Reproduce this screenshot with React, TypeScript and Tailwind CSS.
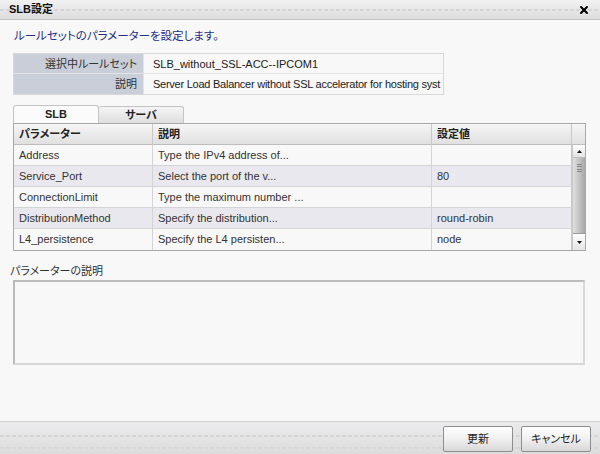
import { X } from 'lucide-react';

const rows = [
  { name: 'Address', desc: 'Type the IPv4 address of...', value: '' },
  { name: 'Service_Port', desc: 'Select the port of the v...', value: '80' },
  { name: 'ConnectionLimit', desc: 'Type the maximum number ...', value: '' },
  { name: 'DistributionMethod', desc: 'Specify the distribution...', value: 'round-robin' },
  { name: 'L4_persistence', desc: 'Specify the L4 persisten...', value: 'node' },
];

const dashed =
  'bg-[repeating-linear-gradient(90deg,#d6d6d8_0px,#d6d6d8_4px,transparent_4px,transparent_6px)]';

export default function App() {
  return (
    <div
      className="w-[600px] h-[454px] flex flex-col bg-[#f8f8f8] text-[11px] text-[#222] overflow-hidden [font-feature-settings:'palt']"
      style={{ fontFamily: '"Liberation Sans", "Noto Sans CJK JP", sans-serif' }}
    >
      {/* title bar */}
      <div className="relative h-[20px] shrink-0 bg-gradient-to-b from-[#f2f2f2] to-[#dcdcdc] border-b border-[#c4c4c4] flex items-center justify-between px-[9px]">
        <div className={`absolute left-0 right-0 top-[9px] h-[2px] ${dashed}`} />
        <span className="relative font-bold text-[11px] text-[#111]">SLB設定</span>
        <X className="relative w-[12px] h-[12px] text-black mr-[1px]" strokeWidth={4} />
      </div>

      <div className="flex-1 flex flex-col px-[13px]">
        <div className="mt-[9px] h-[14px] leading-[14px] text-[#1f2d86] pl-[1px] text-[11.5px]">
          ルールセットのパラメーターを設定します。
        </div>

        {/* info table */}
        <div className="mt-[10px] w-[431px] grid grid-cols-[130px_1fr] border border-[#d8d8d8]">
          <div className="h-[20px] bg-[#c9ced8] text-right pr-[6px] leading-[20px] text-[#333] border-b border-r border-[#e4e4e4]">
            選択中ルールセット
          </div>
          <div className="h-[20px] pl-[9px] leading-[20px] text-[#222] border-b border-[#e4e4e4] whitespace-nowrap overflow-hidden">
            SLB_without_SSL-ACC--IPCOM1
          </div>
          <div className="h-[20px] bg-[#c9ced8] text-right pr-[6px] leading-[20px] text-[#333] border-r border-[#e4e4e4]">
            説明
          </div>
          <div className="h-[20px] pl-[9px] leading-[20px] text-[#222] whitespace-nowrap overflow-hidden tracking-[-0.25px]">
            Server Load Balancer without SSL accelerator for hosting syst
          </div>
        </div>

        {/* tabs */}
        <div className="mt-[10px] flex h-[18px]">
          <div className="w-[86px] h-[18px] border border-b-0 border-[#c4c4c4] rounded-t-[3px] bg-[#fbfbfb] text-center font-bold leading-[17px] text-[#222]">
            SLB
          </div>
          <div className="w-[85px] h-[17px] mt-[1px] border border-b-0 border-l-0 border-[#c4c4c4] rounded-t-[3px] bg-gradient-to-b from-[#f6f6f6] to-[#dedede] text-center font-bold leading-[16px] text-[#222]">
            サーバ
          </div>
        </div>

        {/* grid */}
        <div className="w-[573px] border border-[#a8a8a8] bg-[#f8f8f8]">
          <div className="grid grid-cols-[139px_279px_140px_13px] h-[21px] bg-gradient-to-b from-[#f6f6f6] to-[#e0e0e0] border-b border-[#bdbdbd] font-bold text-[#222]">
            <div className="pl-[5px] leading-[21px] border-r border-[#c8c8c8]">パラメーター</div>
            <div className="pl-[5px] leading-[21px] border-r border-[#c8c8c8]">説明</div>
            <div className="pl-[5px] leading-[21px] border-r border-[#c8c8c8]">設定値</div>
            <div />
          </div>
          <div className="flex">
            <div className="w-[558px]">
              {rows.map((r, i) => (
                <div
                  key={r.name}
                  className={`grid grid-cols-[139px_279px_140px] h-[21px] ${i < rows.length - 1 ? 'border-b border-[#d4d4d8]' : ''} ${i % 2 === 1 ? 'bg-[#e8e8ee]' : 'bg-[#f8f8f8]'} text-[#333]`}
                >
                  <div className="pl-[5px] leading-[21px] border-r border-[#d4d4d8] whitespace-nowrap overflow-hidden">{r.name}</div>
                  <div className="pl-[5px] leading-[21px] border-r border-[#d4d4d8] whitespace-nowrap overflow-hidden">{r.desc}</div>
                  <div className="pl-[5px] leading-[21px] border-r border-[#c8c8c8] whitespace-nowrap overflow-hidden">{r.value}</div>
                </div>
              ))}
            </div>
            {/* scrollbar */}
            <div className="w-[13px] h-[105px] flex flex-col bg-[#ececec] border-l border-[#c8c8c8]">
              <div className="h-[13px] flex items-center justify-center bg-gradient-to-b from-[#ffffff] to-[#e4e4e4] border-b border-[#bdbdbd]">
                <svg width="5" height="3" viewBox="0 0 5 3"><path d="M2.5 0L5 3H0z" fill="#111" /></svg>
              </div>
              <div className="h-[76px] bg-gradient-to-r from-[#e0e0e0] via-[#c4c4c4] to-[#a8a8a8] border-b border-[#9a9a9a] flex justify-center pt-[6px]">
                <div className="w-[5px] h-[8px] flex flex-col justify-between">
                  <div className="h-px bg-[#888]" />
                  <div className="h-px bg-[#888]" />
                  <div className="h-px bg-[#888]" />
                  <div className="h-px bg-[#888]" />
                </div>
              </div>
              <div className="flex-1 flex items-center justify-center bg-gradient-to-b from-[#ffffff] to-[#e4e4e4]">
                <svg width="5" height="3" viewBox="0 0 5 3"><path d="M0 0H5L2.5 3z" fill="#111" /></svg>
              </div>
            </div>
          </div>
        </div>

        <div className="mt-[13px] -ml-[3px] h-[14px] leading-[14px] text-[#333]">パラメーターの説明</div>
        <div className="mt-[2px] w-[572px] h-[85px] border-2 border-[#bcbcbc] border-r-[#d8d8d8] border-b-[#d8d8d8] bg-[#f8f8f8]" />
      </div>

      {/* footer */}
      <div className="relative h-[33px] shrink-0 border-t border-[#d0d0d0] bg-gradient-to-b from-[#ebebed] to-[#dcdcdc] flex items-start justify-end gap-[8px] pr-[9px] pt-[4px]">
        <div className={`absolute left-0 right-0 top-[13px] h-[2px] ${dashed}`} />
        <div className={`absolute left-0 right-0 top-[25px] h-[2px] ${dashed}`} />
        <button className="relative w-[70px] h-[26px] rounded-[2px] border border-[#8e8e8e] bg-gradient-to-b from-[#ffffff] via-[#f0f0f0] to-[#d8d8d8] text-[#222] text-[11px]">
          更新
        </button>
        <button className="relative w-[70px] h-[26px] rounded-[2px] border border-[#8e8e8e] bg-gradient-to-b from-[#ffffff] via-[#f0f0f0] to-[#d8d8d8] text-[#222] text-[11px]">
          キャンセル
        </button>
      </div>
    </div>
  );
}
